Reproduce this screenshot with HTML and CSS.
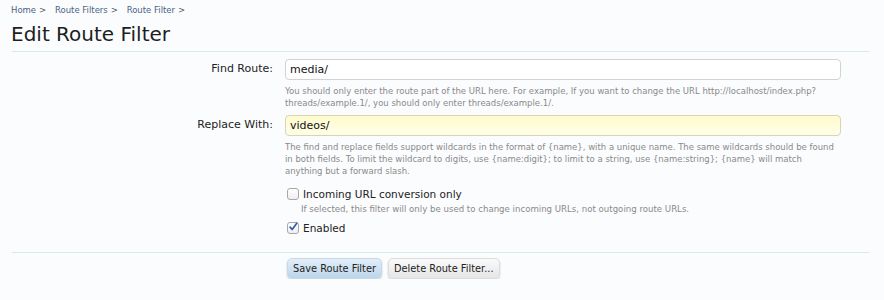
FILE: index.html
```html
<!DOCTYPE html>
<html lang="en">
<head>
  <meta charset="UTF-8" />
  <title>Edit Route Filter</title>
  <link rel="stylesheet" href="styles.css">
</head>
<body>
  <!-- Breadcrumb -->
  <nav class="breadcrumb">
    <a href="#">Home</a><span class="sep">&gt;</span>
    <a href="#">Route Filters</a><span class="sep">&gt;</span>
    <a href="#">Route Filter</a><span class="sep">&gt;</span>
  </nav>

  <h1 class="title">Edit Route Filter</h1>

  <!-- Route filter form -->
  <form class="xen-form">
    <div class="ctrl-unit">
      <label class="ctrl-label" for="find">Find Route:</label>
      <div class="ctrl">
        <input type="text" id="find" class="text-ctrl" value="media/" />
        <p class="explain">You should only enter the route part of the URL here. For example, If you want to change the URL http://localhost/index.php? threads/example.1/, you should only enter threads/example.1/.</p>
      </div>
    </div>

    <div class="ctrl-unit">
      <label class="ctrl-label" for="replace">Replace With:</label>
      <div class="ctrl">
        <input type="text" id="replace" class="text-ctrl focused" value="videos/" />
        <p class="explain">The find and replace fields support wildcards in the format of {name}, with a unique name. The same wildcards should be found in both fields. To limit the wildcard to digits, use {name:digit}; to limit to a string, use {name:string}; {name} will match anything but a forward slash.</p>
      </div>
    </div>

    <div class="ctrl-unit checks">
      <div></div>
      <div class="ctrl">
        <label class="check-row">
          <span class="box"></span>Incoming URL conversion only
        </label>
        <p class="explain">If selected, this filter will only be used to change incoming URLs, not outgoing route URLs.</p>
        <label class="check-row">
          <span class="box">
            <svg width="12" height="12" viewBox="0 0 12 12"><path d="M2.5 6.2 L5 9 L10.5 1.5" fill="none" stroke="#2f5fa8" stroke-width="2" stroke-linecap="round" stroke-linejoin="round"/></svg>
          </span>Enabled
        </label>
      </div>
    </div>

    <!-- Submit row -->
    <div class="submit-unit">
      <div></div>
      <div class="buttons">
        <button type="button" class="btn primary">Save Route Filter</button>
        <button type="button" class="btn">Delete Route Filter...</button>
      </div>
    </div>
  </form>
</body>
</html>
```

FILE: styles.css
```css
/* Page */
body {
  margin: 0;
  background: #fbfcfe;
  font-family: "DejaVu Sans", Verdana, sans-serif;
  color: #222;
}

/* Breadcrumb */
.breadcrumb {
  padding: 4px 11px 0;
  font-size: 8.5px;
  line-height: 12px;
}

.breadcrumb a {
  color: #4b6483;
  text-decoration: none;
}

.breadcrumb .sep {
  color: #555;
  margin: 0 6px 0 3px;
}

/* Heading */
.title {
  margin: 5px 0 0 11px;
  font-size: 20px;
  font-weight: normal;
  line-height: 26px;
  color: #1e1e1e;
}

/* Form */
.xen-form {
  margin: 4px 14px 0 12px;
  border-top: 1px solid #dbe8ee;
  padding-top: 7px;
}

.ctrl-unit,
.submit-unit {
  display: grid;
  grid-template-columns: 261px 556px;
  column-gap: 12px;
}

.ctrl-unit {
  margin-bottom: 6px;
}

.ctrl-label {
  text-align: right;
  font-size: 11px;
  line-height: 20px;
  color: #222;
}

.text-ctrl {
  display: block;
  box-sizing: border-box;
  width: 100%;
  height: 21px;
  margin: 0;
  padding: 2px 4px;
  border: 1px solid #d2d2d2;
  border-radius: 4px;
  background: #fff;
  font-family: inherit;
  font-size: 11px;
  color: #111;
  outline: none;
}

.text-ctrl.focused {
  border-color: #d8d5b4;
  background: linear-gradient(#fffbcd, #fffde8);
}

.explain {
  margin: 5px 0 0;
  font-size: 8.5px;
  line-height: 12px;
  color: #8a8a8a;
}

/* Checkboxes */
.checks {
  margin-top: 9px;
}

.check-row {
  display: flex;
  align-items: center;
  gap: 4px;
  font-size: 10.5px;
  line-height: 16px;
  color: #222;
  margin-left: 2px;
}

.box {
  display: inline-flex;
  width: 10px;
  height: 10px;
  border: 1px solid #a8a8a8;
  border-radius: 3px;
  background: linear-gradient(#fff, #eee);
}

.box svg {
  margin: -2px 0 0 0;
}

.checks .explain {
  margin: 1px 0 5px 16px;
  font-size: 8.6px;
}

/* Buttons */
.submit-unit {
  border-top: 1px solid #dbe8ee;
  padding-top: 5px;
  margin-top: 16px;
}

.buttons {
  display: flex;
  gap: 6px;
}

.btn {
  height: 21px;
  padding: 0 5px;
  border: 1px solid #dcdcdc;
  border-radius: 5px;
  background: linear-gradient(#fafafa, #e6e6e6);
  box-shadow: 0 1px 2px rgba(0, 0, 0, 0.2);
  font-family: inherit;
  font-size: 9.8px;
  color: #222;
}

.btn.primary {
  margin-left: 2px;
  border-color: #c7d9e8;
  background: linear-gradient(#e2eef8, #bcd5ea);
}
```
